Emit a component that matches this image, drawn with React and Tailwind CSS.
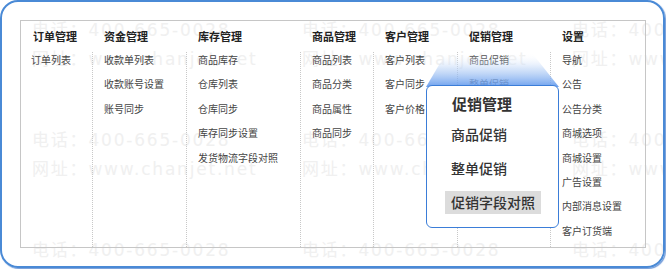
import React from 'react';

const columns = [
  { title: '订单管理', w: 'w-[71px]', items: ['订单列表'] },
  { title: '资金管理', w: 'w-[94px]', items: ['收款单列表', '收款账号设置', '账号同步'] },
  { title: '库存管理', w: 'w-[114px]', items: ['商品库存', '仓库列表', '仓库同步', '库存同步设置', '发货物流字段对照'] },
  { title: '商品管理', w: 'w-[73px]', items: ['商品列表', '商品分类', '商品属性', '商品同步'] },
  { title: '客户管理', w: 'w-[84px]', items: ['客户列表', '客户同步', '客户价格'] },
  { title: '促销管理', w: 'w-[93px]', items: ['商品促销', '整单促销', '促销字段对照'] },
  { title: '设置', w: 'flex-1', items: ['导航', '公告', '公告分类', '商城选项', '商城设置', '广告设置', '内部消息设置', '客户订货端'] },
];

const popupItems = ['商品促销', '整单促销', '促销字段对照'];

// faint phone / site watermark tiled over the panel
const Watermark = () => (
  <div className="absolute inset-0 overflow-hidden pointer-events-none pl-[30px] pt-[14px] font-['DejaVu_Sans','Noto_Sans_CJK_SC',sans-serif] text-[17px] tracking-[1.8px] text-[#f0f0f0] whitespace-nowrap">
    {[0, 1, 2].map((row) => (
      <div key={row} className="flex h-[110px]">
        {[0, 1, 2].map((col) => (
          <div key={col} className="w-[270px] shrink-0 flex flex-col leading-[29px]">
            <span>电话：400-665-0028</span>
            <span>网址：www.chanjet.net</span>
          </div>
        ))}
      </div>
    ))}
  </div>
);

export default function App() {
  return (
    <div className="w-[666px] h-[269px] bg-white font-['Noto_Sans_CJK_SC','Microsoft_YaHei',sans-serif]">
      <div className="relative w-[665px] h-[268px] border-2 border-[#4a8ad6] rounded-[18px] shadow-[1px_1px_1px_rgba(50,110,200,0.7)] overflow-hidden">
        <Watermark />

        {/* menu panel */}
        <div className="relative ml-[18px] mt-[18px] w-[626px] h-[228px] border border-[#c6c6c6] flex">
          {columns.map((col, i) => (
            <div key={col.title} className={`${col.w} flex flex-col`}>
              <div className="pl-[12px] pt-[7px] h-[31px] text-[11px] leading-[16px] font-bold text-[#222]">
                {col.title}
              </div>
              <div
                className={`flex-1 flex flex-col gap-[8.4px] text-[10px] leading-[16px] text-[#444] ${
                  i === 0 ? 'pl-[10px]' : 'border-l border-dotted border-[#c8c8c8] pl-[11px]'
                }`}
              >
                {col.items.map((item) => (
                  <span key={item} className="whitespace-nowrap">{item}</span>
                ))}
              </div>
            </div>
          ))}
        </div>

        {/* highlight beam */}
        <svg className="absolute left-[424px] top-[51px]" width="133" height="34" viewBox="0 0 133 34">
          <defs>
            <linearGradient id="beam" x1="0" y1="0" x2="0" y2="1">
              <stop offset="0" stopColor="#ffffff" stopOpacity="0" />
              <stop offset="0.45" stopColor="#b9d2f6" stopOpacity="0.55" />
              <stop offset="1" stopColor="#5b95ec" stopOpacity="0.9" />
            </linearGradient>
          </defs>
          <polygon points="20,0 106,0 133,34 0,34" fill="url(#beam)" />
        </svg>

        {/* zoomed popup */}
        <div className="absolute left-[424px] top-[83px] w-[133px] h-[143px] bg-white border border-[#3b7dd8] rounded-[6px] flex flex-col pt-[8px] pl-[18px]">
          <div className="pl-[7px] text-[15px] leading-[20px] font-bold text-[#333]">促销管理</div>
          <div className="mt-[9px] flex flex-col gap-[11px]">
            {popupItems.map((item, i) => (
              <span
                key={item}
                className={`w-fit px-[6px] h-[23px] leading-[23px] text-[14px] font-medium text-[#333] whitespace-nowrap ${
                  i === 2 ? 'bg-[#dcdcdc]' : ''
                }`}
              >
                {item}
              </span>
            ))}
          </div>
        </div>
      </div>
    </div>
  );
}
